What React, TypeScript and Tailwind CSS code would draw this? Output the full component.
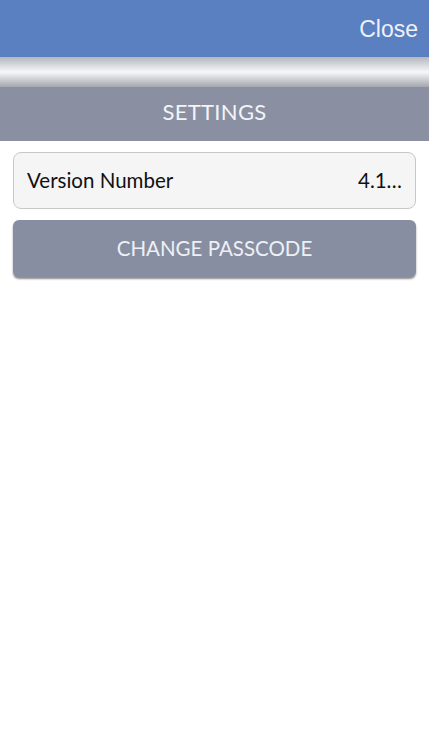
import React from "react";

export default function App() {
    return (
        <div className="flex h-[744px] w-full flex-col bg-white" style={{ fontFamily: "Lato, 'Open Sans', sans-serif" }}>
            <div className="flex h-[57px] items-center justify-end bg-[#5a80c1] pr-[11px]">
                <span className="pt-[1px] text-[23px] text-[#eef2f9]" style={{ fontFamily: "'Liberation Sans', Arial, sans-serif" }}>
                    Close
                </span>
            </div>
            <div className="h-[30px] bg-gradient-to-b from-[#b4b7bd] via-[#f6f7f9] to-[#a4a7ae] shadow-[0_2px_3px_rgba(0,0,0,0.35)]" />
            <div className="flex h-[54px] items-center justify-center bg-[#8a90a2] pb-[6px]">
                <span className="text-[22px] tracking-[0.3px] text-[#f3f4f7]">SETTINGS</span>
            </div>
            <div className="flex flex-col gap-[11px] px-[13px] pt-[11px]">
                <div className="flex h-[57px] items-center justify-between rounded-[8px] border border-[#c8c8c8] bg-[#f5f5f5] pl-[13px] pr-[13px]">
                    <span className="text-[20.5px] text-[#111]">Version Number</span>
                    <span className="text-[20.5px] text-[#111]">4.1…</span>
                </div>
                <button className="flex h-[57px] items-center justify-center rounded-[6px] bg-[#878ea2] shadow-[0_2px_2px_rgba(0,0,0,0.45)]">
                    <span className="text-[20.5px] text-[#eef0f4]">CHANGE PASSCODE</span>
                </button>
            </div>
        </div>
    );
}
